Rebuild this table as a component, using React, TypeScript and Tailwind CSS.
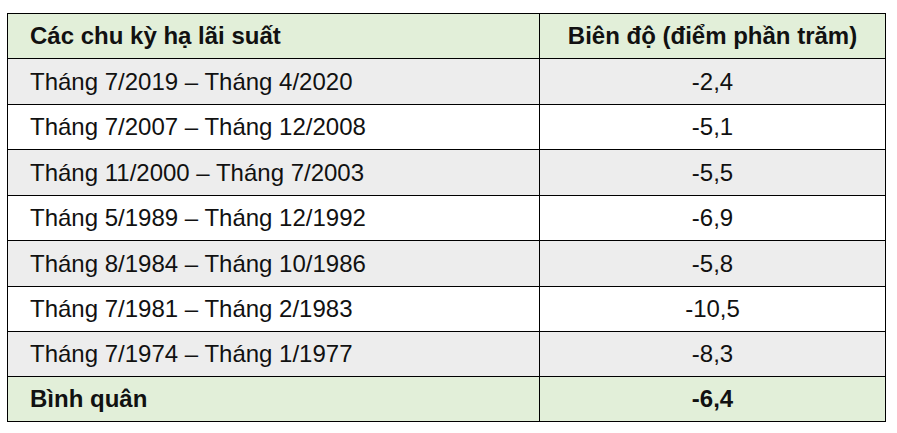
const rows = [
  { period: "Tháng 7/2019 – Tháng 4/2020", value: "-2,4", h: "h-[46px]", bg: "bg-[#ededed]" },
  { period: "Tháng 7/2007 – Tháng 12/2008", value: "-5,1", h: "h-[45px]", bg: "bg-white" },
  { period: "Tháng 11/2000 – Tháng 7/2003", value: "-5,5", h: "h-[46px]", bg: "bg-[#ededed]" },
  { period: "Tháng 5/1989 – Tháng 12/1992", value: "-6,9", h: "h-[45px]", bg: "bg-white" },
  { period: "Tháng 8/1984 – Tháng 10/1986", value: "-5,8", h: "h-[46px]", bg: "bg-[#ededed]" },
  { period: "Tháng 7/1981 – Tháng 2/1983", value: "-10,5", h: "h-[45px]", bg: "bg-white" },
  { period: "Tháng 7/1974 – Tháng 1/1977", value: "-8,3", h: "h-[45px]", bg: "bg-[#ededed]" },
]

export default function App() {
  return (
    <div className="w-[897px] h-[433px] bg-white pt-[13px] pl-[7px] text-[24px] text-[#111] font-['Liberation_Sans',Arial,sans-serif]">
      <div className="w-[879px] border border-black flex flex-col">
        <div className="h-[45px] flex bg-[#e2efd9] border-b border-black font-bold">
          <div className="w-[532px] border-r border-black flex items-center pl-[22px]">Các chu kỳ hạ lãi suất</div>
          <div className="flex-1 flex items-center justify-center">Biên độ (điểm phần trăm)</div>
        </div>

        {rows.map((r) => (
          <div key={r.period} className={`${r.h} ${r.bg} flex border-b border-black`}>
            <div className="w-[532px] border-r border-black flex items-center pl-[22px]">{r.period}</div>
            <div className="flex-1 flex items-center justify-center">{r.value}</div>
          </div>
        ))}

        <div className="h-[44px] flex bg-[#e2efd9] font-bold">
          <div className="w-[532px] border-r border-black flex items-center pl-[22px]">Bình quân</div>
          <div className="flex-1 flex items-center justify-center">-6,4</div>
        </div>
      </div>
    </div>
  )
}
